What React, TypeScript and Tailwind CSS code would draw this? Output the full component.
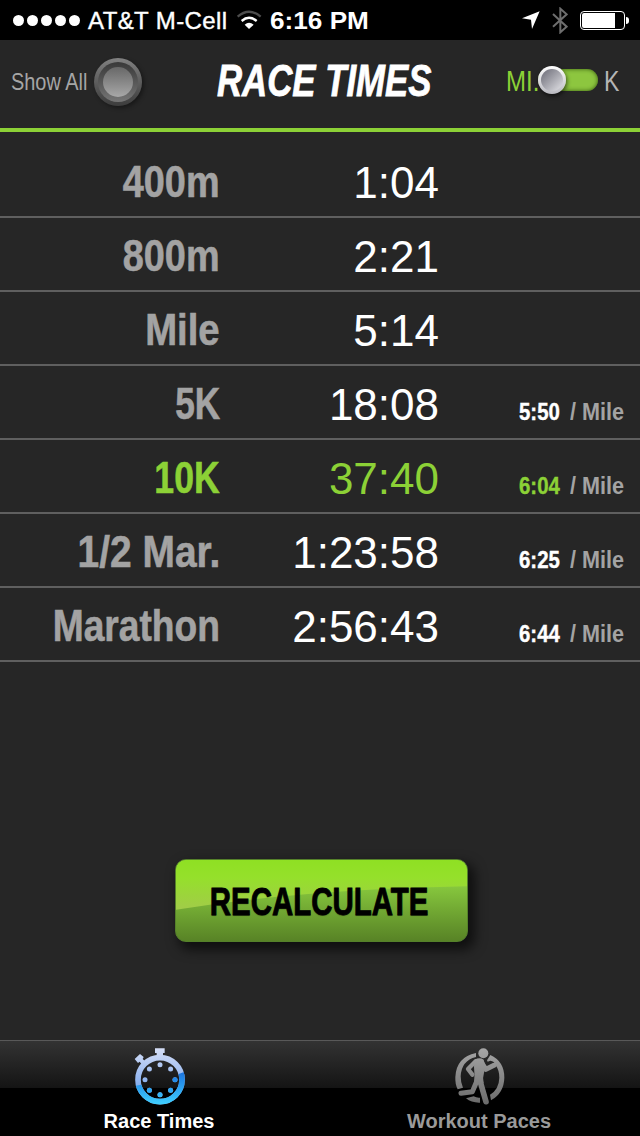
import React, { useState } from "react";
import clsx from "clsx";

interface RaceTime {
  label: string;
  time: string;
  pace?: string;
  squeeze: string; // horizontal condensing of the label
}

const races: RaceTime[] = [
  { label: "400m", time: "1:04", squeeze: "scale-x-[0.86]" },
  { label: "800m", time: "2:21", squeeze: "scale-x-[0.86]" },
  { label: "Mile", time: "5:14", squeeze: "scale-x-[0.87]" },
  { label: "5K", time: "18:08", pace: "5:50", squeeze: "scale-x-[0.8]" },
  { label: "10K", time: "37:40", pace: "6:04", squeeze: "scale-x-[0.81]" },
  { label: "1/2 Mar.", time: "1:23:58", pace: "6:25", squeeze: "scale-x-[0.885]" },
  { label: "Marathon", time: "2:56:43", pace: "6:44", squeeze: "scale-x-[0.845]" },
];

function StatusBar() {
  return (
    <div className="h-10 bg-black flex items-center text-white text-2xl leading-10">
      <div className="w-[270px] pl-[13px] flex items-center">
        <div className="flex gap-[3px]">
          {[0, 1, 2, 3, 4].map((n) => (
            <span key={n} className="w-[11px] h-[11px] rounded-full bg-white" />
          ))}
        </div>
        <span className="ml-2 pt-px w-[141px] whitespace-nowrap tracking-[0.4px] [-webkit-text-stroke:0.4px_white]">
          AT&amp;T M-Cell
        </span>
        <svg className="ml-[7px] w-[26px] h-5" viewBox="706 31 78 60" fill="none" strokeWidth="7">
          <path d="M711 51 Q745 21 780 51" stroke="#4d4d4d" />
          <path d="M723 64 Q745 45 768 64" stroke="#fff" />
          <path d="M732 75 Q745 63 759 75 L745 88 Z" fill="#fff" />
        </svg>
      </div>
      <span className="pt-px w-[99px] whitespace-nowrap font-bold">
        <span className="inline-block origin-left scale-x-[1.09]">6:16 PM</span>
      </span>
      <div className="ml-auto pr-[11px] flex items-center">
        <svg className="w-[18px] h-[18px]" viewBox="607 36 54 54">
          <path d="M607 58 L660 37 L637 90 L634 62 Z" fill="#fff" />
        </svg>
        <svg className="ml-3 w-4 h-[27px]" viewBox="695 21 48 81" fill="none" stroke="#6e6e6e" strokeWidth="6">
          <path d="M698 42 L739 80 L720 97 V26 L739 43 L698 80" />
        </svg>
        <div className="ml-3 w-[45px] h-[19px] border border-white rounded-[4px] p-px">
          <div className="w-[33px] h-full bg-white rounded-l-[2px]" />
        </div>
        <span className="ml-px w-[3px] h-[7px] bg-white rounded-r-full" />
      </div>
    </div>
  );
}

function Header({ metric, onToggle }: { metric: boolean; onToggle: () => void }) {
  return (
    <header className="h-[92px] border-b-4 border-[#8cd136] flex items-start">
      <div className="w-[217px] pl-[11px] pt-[18px] flex items-center">
        <span className="w-[83px] text-2xl leading-12 text-[#a5a5a5] whitespace-nowrap">
          <span className="inline-block origin-left scale-x-[0.83]">Show All</span>
        </span>
        <button className="w-[48px] h-[48px] rounded-full p-[4px] bg-linear-to-b from-[#818181] to-[#3c3c3c] shadow-[2px_2px_4px_rgba(0,0,0,0.4)]">
          <span className="block w-full h-full rounded-full p-[5px] bg-linear-to-b from-[#393939] to-[#767676]">
            <span className="block w-full h-full rounded-full bg-linear-to-b from-[#686868] to-[#a8a8a8]" />
          </span>
        </button>
      </div>
      <h1 className="w-[216px] pt-[15px] text-[44px] leading-[52px] font-bold italic text-white whitespace-nowrap [-webkit-text-stroke:0.8px_white]">
        <span className="inline-block origin-left scale-x-[0.79]">RACE TIMES</span>
      </h1>
      <div className="ml-auto w-[134px] h-20 flex items-center text-[30px]">
        <span className={clsx("w-[32px] whitespace-nowrap", metric ? "text-[#b5b5b5]" : "text-[#8cd136]")}>
          <span className="inline-block origin-left scale-x-[0.8]">MI.</span>
        </span>
        <button
          onClick={onToggle}
          className={clsx(
            "w-[60px] h-[22px] rounded-full bg-[#8dc63f] shadow-[inset_0_0_4px_rgba(30,60,0,0.8)] flex items-center",
            metric && "justify-end"
          )}
        >
          <span className="shrink-0 w-[28px] h-[28px] rounded-full p-[3px] bg-linear-to-b from-white to-[#b9b9c0] shadow-[1px_2px_4px_rgba(0,0,0,0.6)]">
            <span className="block w-full h-full rounded-full bg-linear-to-br from-[#6b6b76] to-[#e4e4e8]" />
          </span>
        </button>
        <span className={clsx("ml-[6px]", metric ? "text-[#8cd136]" : "text-[#b5b5b5]")}>
          <span className="inline-block origin-left scale-x-[0.77]">K</span>
        </span>
      </div>
    </header>
  );
}

function RaceRow({ race, active, onSelect }: { race: RaceTime; active: boolean; onSelect: () => void }) {
  return (
    <li
      onClick={onSelect}
      className="h-[74px] pt-[3px] border-b-2 border-[#5f5f5f] flex items-baseline leading-[72px] whitespace-nowrap"
    >
      <span className="w-[220px] flex justify-end text-[44px] font-bold">
        <span
          className={clsx(
            "origin-right -translate-y-px [-webkit-text-stroke:0.6px_currentColor]",
            race.squeeze,
            active ? "text-[#8cd136]" : "text-[#a3a3a3]"
          )}
        >
          {race.label}
        </span>
      </span>
      <span className={clsx("w-[219px] text-right text-[44px]", active ? "text-[#8cd136]" : "text-white")}>
        {race.time}
      </span>
      {race.pace && (
        <>
          <span
            className={clsx(
              "ml-[80px] w-[51px] text-2xl leading-none font-bold",
              active ? "text-[#8cd136]" : "text-white"
            )}
          >
            <span className="inline-block origin-left scale-x-[0.85] [-webkit-text-stroke:0.4px_currentColor]">
              {race.pace}
            </span>
          </span>
          <span className="text-2xl leading-none font-bold text-[#a3a3a3]">
            <span className="inline-block origin-left scale-x-[0.9]">/ Mile</span>
          </span>
        </>
      )}
    </li>
  );
}

function RecalculateButton() {
  return (
    <button className="relative w-[293px] h-[83px] rounded-[11px] overflow-hidden bg-linear-to-b from-[#8ccf40] from-25% to-[#588326] border border-[#55812a]">
      {/* Gloss sweep across the upper half */}
      <svg className="absolute inset-0 w-full h-full" viewBox="0 0 293 83" preserveAspectRatio="none">
        <defs>
          <linearGradient id="gloss" x1="0" y1="0" x2="0" y2="1">
            <stop offset="0" stopColor="#8fe023" />
            <stop offset="0.35" stopColor="#95e02b" />
            <stop offset="1" stopColor="#a2cb49" />
          </linearGradient>
        </defs>
        <path d="M0 0 H293 V27 Q130 30 0 51 Z" fill="url(#gloss)" />
      </svg>
      <span className="relative pr-1 flex justify-center text-[38px] leading-[84px] font-bold text-black whitespace-nowrap [text-shadow:0_1px_1px_rgba(0,0,0,0.35)] [-webkit-text-stroke:0.8px_black]">
        <span className="scale-x-[0.775]">RECALCULATE</span>
      </span>
    </button>
  );
}

function StopwatchIcon() {
  const dots = [0, 45, 90, 135, 180, 225, 270, 315];
  return (
    <svg className="w-[55px] h-[60px]" viewBox="100 47 165 180">
      <defs>
        <linearGradient id="watchTop" x1="0" y1="54" x2="0" y2="165" gradientUnits="userSpaceOnUse">
          <stop offset="0" stopColor="#d5def6" />
          <stop offset="1" stopColor="#86aeee" />
        </linearGradient>
        <linearGradient id="watchBottom" x1="0" y1="125" x2="0" y2="222" gradientUnits="userSpaceOnUse">
          <stop offset="0" stopColor="#1a73e0" />
          <stop offset="1" stopColor="#3fd0ff" />
        </linearGradient>
        <clipPath id="lowerHalf">
          <path d="M98 168 Q180 155 263 121 V230 H98 Z" />
        </clipPath>
      </defs>
      <g fill="url(#watchTop)">
        <path d="M166 54 H195 V68 H190 V78 H171 V68 H166 Z" />
        <path d="M105 86 L121 71 L132 80 L129 86 L138 94 L128 104 L120 94 L115 98 Z" />
        {dots.map((a) => (
          <circle
            key={a}
            cx={181 + 45 * Math.sin((a * Math.PI) / 180)}
            cy={148 - 45 * Math.cos((a * Math.PI) / 180)}
            r="7.5"
          />
        ))}
      </g>
      <circle cx="181" cy="148" r="66" fill="none" stroke="url(#watchTop)" strokeWidth="17" />
      <g clipPath="url(#lowerHalf)" fill="url(#watchBottom)">
        {dots.map((a) => (
          <circle
            key={a}
            cx={181 + 45 * Math.sin((a * Math.PI) / 180)}
            cy={148 - 45 * Math.cos((a * Math.PI) / 180)}
            r="7.5"
          />
        ))}
        <circle cx="181" cy="148" r="66" fill="none" stroke="url(#watchBottom)" strokeWidth="17" />
      </g>
    </svg>
  );
}

function RunnerIcon() {
  return (
    <svg className="w-[55px] h-[60px]" viewBox="158 46 165 180" fill="none">
      <defs>
        <linearGradient id="runner" x1="0" y1="54" x2="0" y2="222" gradientUnits="userSpaceOnUse">
          <stop offset="0" stopColor="#a6a6a6" />
          <stop offset="1" stopColor="#6a6a6a" />
        </linearGradient>
      </defs>
      <g fill="url(#runner)">
        <path d="M227 67 V79 Q183 90 181 137 Q181 157 188 171 L172 176 Q164 160 165 139 Q168 79 227 67 Z" />
        <path d="M270 73 Q312 92 312 141 Q311 187 272 209 L269 192 Q296 176 297 141 Q297 119 286 104 Q282 91 270 90 L262 93 L260 89 Z" />
        <path d="M197 203 L220 197 Q229 202 239 201 V216 Q214 217 197 203 Z" />
        <circle cx="249" cy="68" r="15" />
      </g>
      <g stroke="url(#runner)" strokeLinecap="round" strokeLinejoin="round">
        <path d="M226 92 L203 115 L216 132" strokeWidth="13" />
        <path d="M244 97 L257 116 L281 104" strokeWidth="15" />
        <path d="M230 150 L216 183 L182 188" strokeWidth="15" />
        <path d="M239 150 L257 213" strokeWidth="17" />
      </g>
      <path d="M223 87 Q238 79 250 87 L256 110 L251 126 Q246 142 250 158 L221 156 Q224 136 221 108 Z" fill="url(#runner)" />
    </svg>
  );
}

function TabBar({ tab, onChange }: { tab: number; onChange: (n: number) => void }) {
  const tabs = [
    { name: "Race Times", icon: <StopwatchIcon /> },
    { name: "Workout Paces", icon: <RunnerIcon /> },
  ];

  return (
    <nav className="h-24 flex border-t border-[#595959] bg-[linear-gradient(to_bottom,#333333_0px,#141414_47px,#000000_47px)]">
      {tabs.map((t, idx) => (
        <button
          key={t.name}
          onClick={() => onChange(idx)}
          className={clsx(
            "w-1/2 pt-[5px] flex flex-col items-center text-xl font-bold",
            tab === idx ? "text-white" : "text-[#9a9a9a]"
          )}
        >
          {t.icon}
          <span className="pr-0.5 leading-[30px]">{t.name}</span>
        </button>
      ))}
    </nav>
  );
}

export default function App() {
  const [metric, setMetric] = useState(false);
  const [selected, setSelected] = useState("10K");
  const [tab, setTab] = useState(0);

  return (
    <div className="w-[640px] h-[1136px] bg-[#262626] flex flex-col overflow-hidden font-['Liberation_Sans',Arial,sans-serif]">
      <StatusBar />
      <Header metric={metric} onToggle={() => setMetric(!metric)} />

      <ul className="pt-3">
        {races.map((r) => (
          <RaceRow
            key={r.label}
            race={r}
            active={selected === r.label}
            onSelect={() => setSelected(r.label)}
          />
        ))}
      </ul>

      <div className="flex-1 pt-[197px] pl-[175px]">
        <div className="w-[293px] h-[83px] rounded-[11px] shadow-[5px_6px_12px_2px_rgba(0,0,0,0.6)]">
          <RecalculateButton />
        </div>
      </div>

      <TabBar tab={tab} onChange={setTab} />
    </div>
  );
}
